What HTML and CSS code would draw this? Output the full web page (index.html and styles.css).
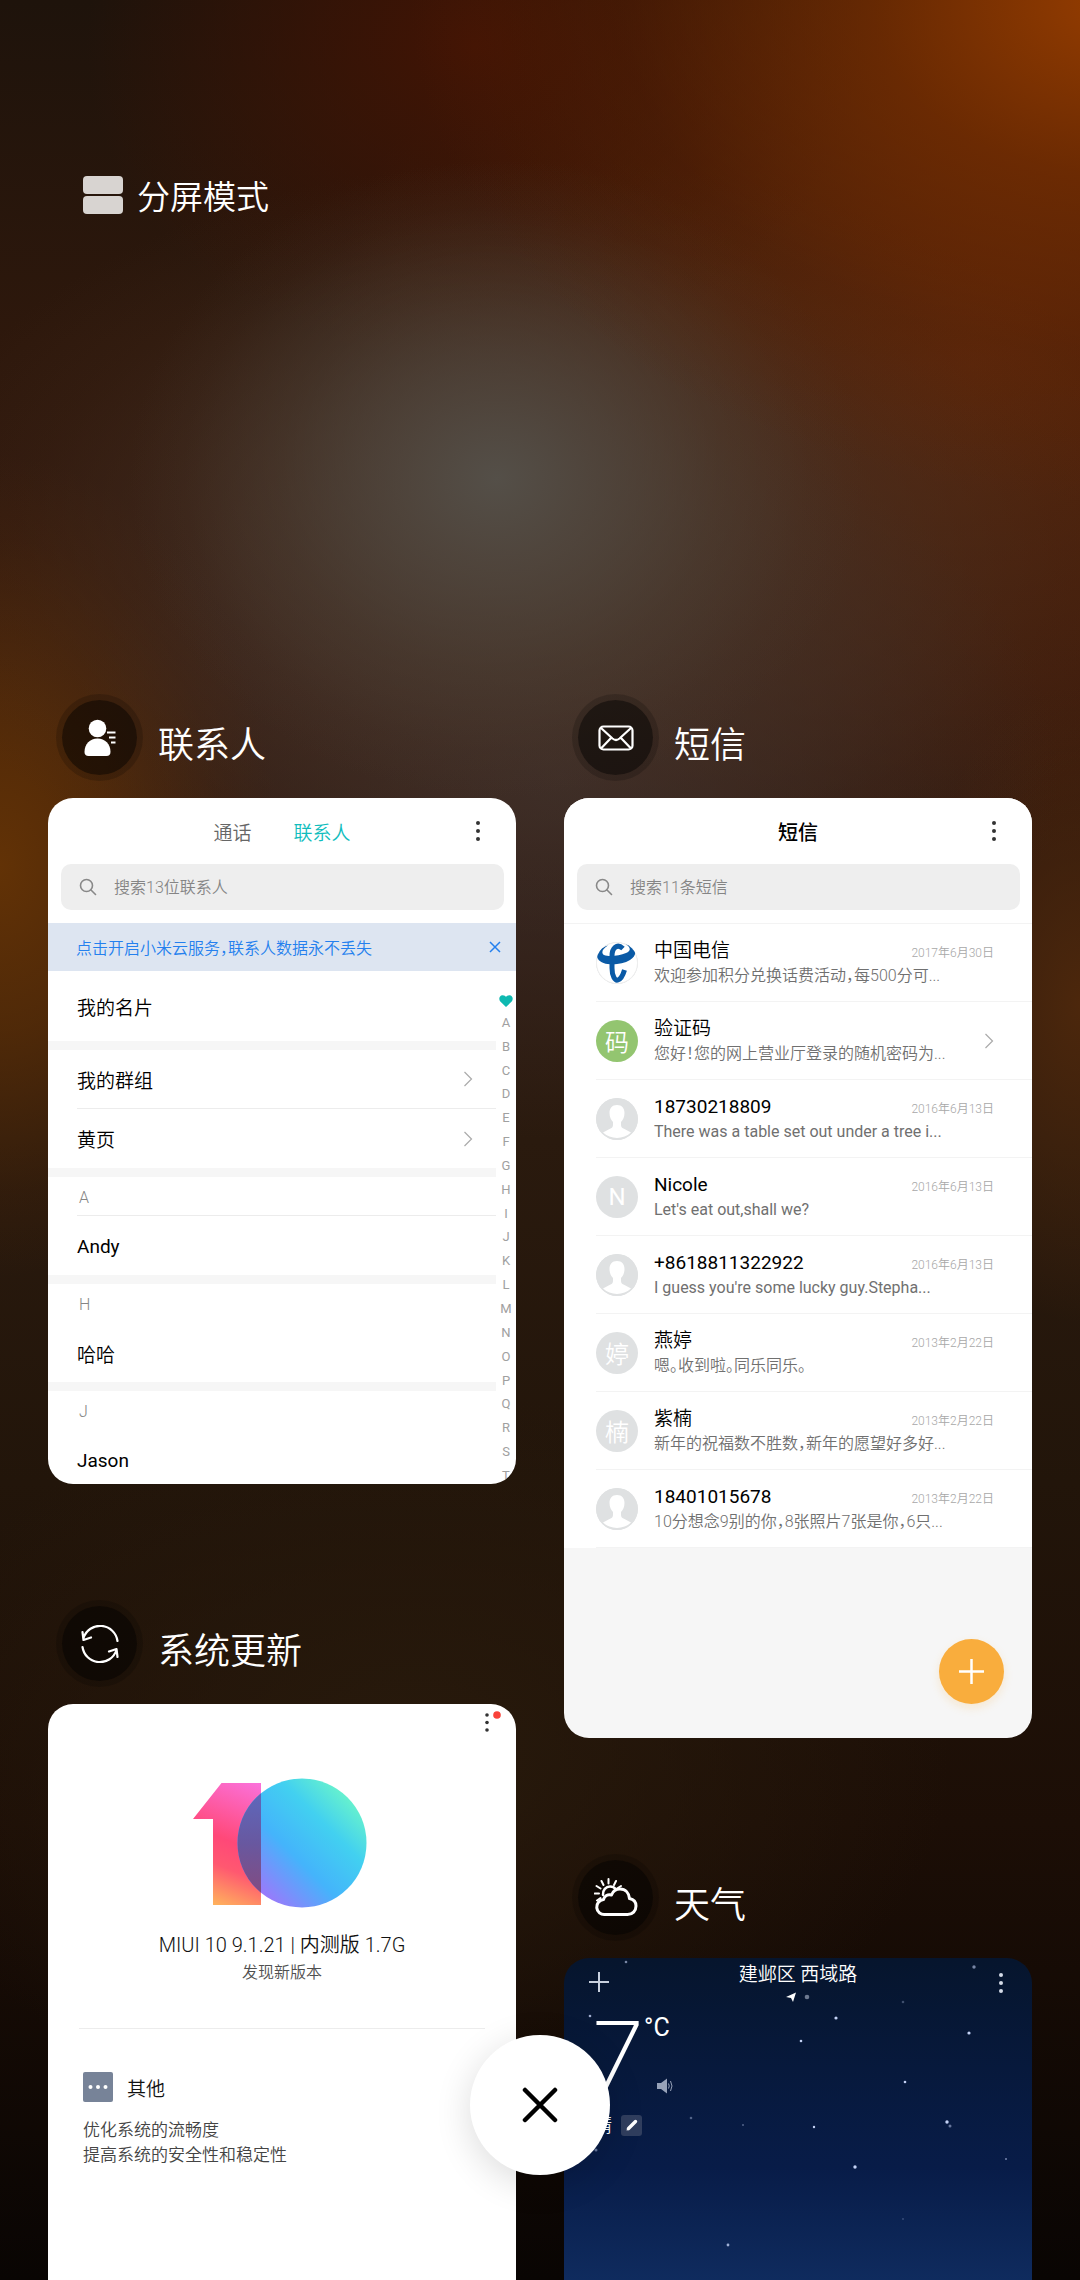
FILE: index.html
```html
<!DOCTYPE html>
<html lang="zh-CN">
<head>
<meta charset="utf-8">
<meta name="viewport" content="width=device-width, initial-scale=1">
<title>最近任务</title>
<link rel="stylesheet" href="styles.css">
</head>
<body>
<svg class="symbols" width="0" height="0" aria-hidden="true">
  <symbol id="more" viewBox="0 0 20 22"><circle cx="10" cy="3" r="2"/><circle cx="10" cy="11" r="2"/><circle cx="10" cy="19" r="2"/></symbol>
  <symbol id="search" viewBox="0 0 18 18"><g fill="none" stroke="currentColor" stroke-width="1.6" stroke-linecap="round"><circle cx="7.5" cy="7.5" r="6"/><path d="M12 12l4.5 4.5"/></g></symbol>
  <symbol id="chevron" viewBox="0 0 10 16"><path d="M1.5 1l7 7-7 7" fill="none" stroke="currentColor" stroke-width="1.2"/></symbol>
  <symbol id="person" viewBox="0 0 42 42"><circle cx="21" cy="21" r="21" fill="#dfe1e2"/><path d="M21 7c-5 0-7.500 3.500-7.500 8 0 4 1.500 7 3.500 9v3c0 2-1 3-3.500 4L7 34.500A20.500 20.500 0 0 0 35 34.500L28.500 31c-2.500-1-3.500-2-3.500-4v-3c2-2 3.500-5 3.500-9 0-4.500-2.500-8-7.500-8z" fill="#fff"/></symbol>
</svg>

<main class="recents">
  <button class="split" type="button">
    <span class="split-icon"><i></i><i></i></span>分屏模式
  </button>

  <div class="columns">
    <div class="column">
      <section class="task">
        <header class="task-head">
          <span class="app-icon">
            <svg width="32" height="38" viewBox="0 0 32 38" fill="#fff"><circle cx="13.500" cy="9.500" r="8.800"/><path d="M13.500 19.500C6 19.500.5 25 .5 33c0 2.500 1.500 4 4 4h18c2.500 0 4-1.500 4-4 0-8-5.500-13.500-13-13.500z"/><path d="M23 13.500h8.500M25 18.500h6.500M27 23.500h4.500" stroke="#fff" stroke-width="2"/></svg>
          </span>
          <h2>联系人</h2>
        </header>
        <article class="card card-contacts">
          <div class="bar">
            <nav class="tabs"><a href="#calls">通话</a><a href="#contacts" class="active">联系人</a></nav>
            <button class="more" type="button" aria-label="更多"><svg width="20" height="22"><use href="#more"/></svg></button>
          </div>
          <label class="search"><svg width="18" height="18"><use href="#search"/></svg><input type="search" placeholder="搜索13位联系人" aria-label="搜索联系人"></label>
          <div class="notice">
            <a href="#cloud">点击开启小米云服务，联系人数据永不丢失</a>
            <button type="button" aria-label="关闭提示"><svg width="12" height="12" viewBox="0 0 12 12"><path d="M1 1l10 10M11 1L1 11" stroke="currentColor" stroke-width="1.5"/></svg></button>
          </div>
          <div class="contacts">
            <div class="contact-list">
              <ul class="group"><li class="mine">我的名片</li></ul>
              <ul class="group"><li class="ruled">我的群组<svg width="10" height="16"><use href="#chevron"/></svg></li><li>黄页<svg width="10" height="16"><use href="#chevron"/></svg></li></ul>
              <h3 class="ruled">A</h3><ul class="group"><li lang="en">Andy</li></ul>
              <h3>H</h3><ul class="group"><li>哈哈</li></ul>
              <h3>J</h3><ul class="group"><li lang="en">Jason</li></ul>
            </div>
            <div class="index" lang="en">
              <svg width="14" height="12" viewBox="0 0 14 12"><path d="M7 12L1.300 6.500C-.6 4.300.2.500 3.500.3 5.200.2 6.400 1.100 7 2c.6-.9 1.800-1.800 3.500-1.700 3.300.2 4.100 4 2.200 6.200z" fill="#0fb9b1"/></svg>
              <span>A</span><span>B</span><span>C</span><span>D</span><span>E</span><span>F</span><span>G</span><span>H</span><span>I</span><span>J</span><span>K</span><span>L</span><span>M</span><span>N</span><span>O</span><span>P</span><span>Q</span><span>R</span><span>S</span><span>T</span>
            </div>
          </div>
        </article>
      </section>

      <section class="task task-open">
        <header class="task-head">
          <span class="app-icon">
            <svg width="38" height="38" viewBox="0 0 38 38" fill="none" stroke="#fff" stroke-width="2.200" stroke-linecap="round" stroke-linejoin="round"><path d="M2.500 13A17.500 17.500 0 0 1 36.500 16M35.500 25A17.500 17.500 0 0 1 1.500 22M1.500 7l1 8 7.500-2.500M36.500 32l-1-8-7.500 2.500"/></svg>
          </span>
          <h2>系统更新</h2>
        </header>
        <article class="card card-update">
          <button class="more" type="button" aria-label="更多"><svg width="24" height="26" viewBox="0 0 24 26"><circle cx="8" cy="5" r="1.800"/><circle cx="8" cy="12.500" r="1.800"/><circle cx="8" cy="20" r="1.800"/><circle cx="18" cy="5" r="3.800" fill="#f9423a"/></svg></button>
          <svg class="logo" width="178" height="132" viewBox="0 0 178 132" role="img" aria-label="MIUI 10">
            <defs>
              <linearGradient id="one" gradientUnits="userSpaceOnUse" x1="68" y1="6" x2="20" y2="128"><stop offset="0" stop-color="#fb72dc"/><stop offset=".5" stop-color="#ff4878"/><stop offset=".7" stop-color="#ff5870"/><stop offset="1" stop-color="#ffb45c"/></linearGradient>
              <linearGradient id="zero" gradientUnits="userSpaceOnUse" x1="160" y1="22" x2="64" y2="118"><stop offset="0" stop-color="#68f3cc"/><stop offset=".28" stop-color="#42d0f0"/><stop offset=".6" stop-color="#44b4fb"/><stop offset="1" stop-color="#a274fb"/></linearGradient>
              <linearGradient id="overlap" x1="0" y1="0" x2="0" y2="1"><stop offset="0" stop-color="#5a6cc4"/><stop offset=".5" stop-color="#6858a0"/><stop offset="1" stop-color="#8a4878"/></linearGradient>
              <clipPath id="stem"><path d="M20 6h48v122H20z"/></clipPath>
            </defs>
            <path d="M0 42L28.500 6H68v122H20V42z" fill="url(#one)"/>
            <circle cx="109" cy="66" r="64.500" fill="url(#zero)"/>
            <circle cx="109" cy="66" r="64.500" fill="url(#overlap)" clip-path="url(#stem)"/>
          </svg>
          <h3>MIUI 10 9.1.21 | 内测版 1.7G</h3>
          <p class="found">发现新版本</p>
          <hr>
          <div class="notes">
            <h4><svg width="30" height="30" viewBox="0 0 30 30"><rect width="30" height="30" rx="2" fill="#778398"/><g fill="#fff"><circle cx="7.500" cy="15" r="2"/><circle cx="15" cy="15" r="2"/><circle cx="22.500" cy="15" r="2"/></g></svg>其他</h4>
            <p>优化系统的流畅度<br>提高系统的安全性和稳定性</p>
          </div>
        </article>
      </section>
    </div>

    <div class="column">
      <section class="task">
        <header class="task-head">
          <span class="app-icon">
            <svg width="36" height="26" viewBox="0 0 36 26" fill="none" stroke="#fff" stroke-width="2.200" stroke-linejoin="round"><rect x="1.500" y="1.500" width="33" height="23" rx="4"/><path d="M3 3l11.500 10.500q3.500 3 7 0L33 3M3 23.500L13 13M33 23.500L23 13"/></svg>
          </span>
          <h2>短信</h2>
        </header>
        <article class="card card-sms">
          <div class="sms-top">
            <div class="bar">
              <h3>短信</h3>
              <button class="more" type="button" aria-label="更多"><svg width="20" height="22"><use href="#more"/></svg></button>
            </div>
            <label class="search"><svg width="18" height="18"><use href="#search"/></svg><input type="search" placeholder="搜索11条短信" aria-label="搜索短信"></label>
          </div>
          <ul class="threads">
            <li>
              <svg class="avatar" viewBox="0 0 42 42"><circle cx="21" cy="21" r="20.500" fill="#fff" stroke="#eee"/><path d="M12 3.500C4 6-1 12 2 17c4 7 22 7 32 1 8-5 7-13-4-16 5 4 5 7 0 9-7 3-17 4-22 2C5 11 6 7 12 3.500z" fill="#0a5aa6"/><path d="M27 6.500C21 1 16 6 16 14v12c0 8 3 13 6 12s5-5 6.500-10" fill="none" stroke="#0a5aa6" stroke-width="5"/></svg>
              <div class="thread"><p class="who"><b>中国电信</b><time>2017年6月30日</time></p><p class="text">欢迎参加积分兑换话费活动，每500分可...</p></div>
            </li>
            <li>
              <span class="avatar green">码</span>
              <div class="thread"><p class="who"><b>验证码</b></p><p class="text">您好！您的网上营业厅登录的随机密码为...</p></div>
              <svg class="go" width="10" height="16"><use href="#chevron"/></svg>
            </li>
            <li>
              <svg class="avatar"><use href="#person"/></svg>
              <div class="thread"><p class="who"><b lang="en">18730218809</b><time>2016年6月13日</time></p><p class="text" lang="en">There was a table set out under a tree i...</p></div>
            </li>
            <li>
              <span class="avatar" lang="en">N</span>
              <div class="thread"><p class="who"><b lang="en">Nicole</b><time>2016年6月13日</time></p><p class="text" lang="en">Let's eat out,shall we?</p></div>
            </li>
            <li>
              <svg class="avatar"><use href="#person"/></svg>
              <div class="thread"><p class="who"><b lang="en">+8618811322922</b><time>2016年6月13日</time></p><p class="text" lang="en">I guess you're some lucky guy.Stepha...</p></div>
            </li>
            <li>
              <span class="avatar">婷</span>
              <div class="thread"><p class="who"><b>燕婷</b><time>2013年2月22日</time></p><p class="text">嗯。收到啦。同乐同乐。</p></div>
            </li>
            <li>
              <span class="avatar">楠</span>
              <div class="thread"><p class="who"><b>紫楠</b><time>2013年2月22日</time></p><p class="text">新年的祝福数不胜数，新年的愿望好多好...</p></div>
            </li>
            <li>
              <svg class="avatar"><use href="#person"/></svg>
              <div class="thread"><p class="who"><b lang="en">18401015678</b><time>2013年2月22日</time></p><p class="text">10分想念9别的你，8张照片7张是你，6只...</p></div>
            </li>
          </ul>
          <div class="compose">
            <button type="button" aria-label="新建短信"><svg width="25" height="25" viewBox="0 0 25 25"><path d="M12.500 0v25M0 12.500h25" stroke="#fff" stroke-width="2.500"/></svg></button>
          </div>
        </article>
      </section>

      <section class="task task-open">
        <header class="task-head">
          <span class="app-icon">
            <svg width="44" height="40" viewBox="0 0 44 40" fill="none" stroke="#fff" stroke-linejoin="round" stroke-linecap="round"><path d="M11 36.500a7.500 7.500 0 0 1-1.500-15c1-3.500 4-5.500 8-4.500 1.500-4 4.500-6 8.500-6 5.500 0 9 4 9.500 9.500 4.500 1 6.500 4 6.500 7.500 0 5-3.500 8.500-8.500 8.500z" stroke-width="3"/><path d="M9 17c-.5-5 3-8.500 7-8.500 2.500 0 4.500 1 5.500 2.500" stroke-width="2.500"/><path d="M14.500 1v4.500M7.500 3l2 4M22 3l-2 4M2.500 8l4 2.500M27 8l-4 2.500M.8 15.500H5M3 22.500L6.500 20" stroke-width="2"/></svg>
          </span>
          <h2>天气</h2>
        </header>
        <article class="card card-weather">
          <svg class="stars" viewBox="0 0 468 322" fill="#c4d2f5" aria-hidden="true"><circle cx="62" cy="4" r="1.300" opacity=".6"/><circle cx="26" cy="58" r="1.300" opacity=".8"/><circle cx="410" cy="9" r="1.700" opacity=".6"/><circle cx="339" cy="44" r="1.300" opacity=".3"/><circle cx="272" cy="60" r="1.600"/><circle cx="237" cy="83" r="1.300"/><circle cx="405" cy="75" r="1.600"/><circle cx="341" cy="124" r="1.300"/><circle cx="127" cy="160" r="1.300" opacity=".4"/><circle cx="179" cy="167" r="1" opacity=".4"/><circle cx="250" cy="169" r="1.200"/><circle cx="383" cy="164" r="1.700"/><circle cx="386" cy="168" r="1.500" opacity=".5"/><circle cx="291" cy="209" r="1.700"/><circle cx="442" cy="201" r=".8"/><circle cx="339" cy="261" r=".8" opacity=".4"/><circle cx="164" cy="287" r="1.400" opacity=".8"/><circle cx="32" cy="192" r="1.500" opacity=".5"/></svg>
          <div class="weather-bar">
            <button type="button" aria-label="添加城市"><svg width="28" height="22" viewBox="0 0 28 22"><path d="M14 0v20M4 10h20" stroke="#c8d0de" stroke-width="2"/></svg></button>
            <h3>建邺区 西域路</h3>
            <button class="weather-more" type="button" aria-label="更多"><svg width="20" height="22"><use href="#more"/></svg></button>
          </div>
          <svg class="pages" width="26" height="16" viewBox="0 0 26 16"><path d="M1 8l10-4.500L8 13 6 9z" fill="#fff"/><circle cx="22" cy="8" r="2.300" fill="#6d7990"/></svg>
          <div class="temperature">
            <span class="degrees">7</span>
            <div class="unit"><span>°C</span><svg width="18" height="16" viewBox="0 0 18 16"><path d="M1 5h4l6-4.500v15L5 11H1z" fill="#97a2b8"/><path d="M12.500 5.500q1.500 2.500 0 5M14.500 3q3 5 0 10" fill="none" stroke="#97a2b8"/></svg></div>
          </div>
          <div class="condition"><span>晴</span><svg width="21" height="21" viewBox="0 0 21 21"><rect width="21" height="21" rx="3" fill="#303e5e"/><path d="M7.500 13.500l7-7" stroke="#fff" stroke-width="3.400" stroke-linecap="round"/><path d="M5.500 15.500l.6-2.500 2 2z" fill="#fff"/></svg></div>
        </article>
      </section>
    </div>
  </div>
</main>

<button class="clear" type="button" aria-label="清除全部"><svg width="36" height="36" viewBox="0 0 36 36"><path d="M3 3l30 30M33 3L3 33" stroke="#000" stroke-width="4.500" stroke-linecap="round"/></svg></button>
</body>
</html>
```

FILE: styles.css
```css
* {
  box-sizing: border-box;
}

body,
h2,
h3,
h4,
p,
ul {
  margin: 0;
  padding: 0;
}

body {
  font-family: Roboto, "Noto Sans CJK SC", sans-serif;
  font-size: 19px;
  font-weight: 350;
  font-feature-settings: "halt";
  color: #111;
  background: #120a05;
}

ul {
  list-style: none;
}

h2,
h3,
h4,
b {
  font-weight: 350;
}

[lang="en"] {
  font-weight: 400;
}

svg {
  display: block;
  flex: none;
}

button {
  padding: 0;
  border: 0;
  background: none;
  font: inherit;
  color: inherit;
}

a {
  color: inherit;
  text-decoration: none;
}

.symbols {
  position: absolute;
}

.recents {
  display: flex;
  flex-direction: column;
  min-height: 100vh;
  padding: 0 48px;
  background:
    radial-gradient(ellipse 66% 22% at 104% 0%, #963d00 0%, rgba(120, 46, 0, 0.75) 35%, rgba(100, 36, 0, 0.3) 70%, transparent 100%),
    radial-gradient(ellipse 34% 14% at 46% 21%, #544f48 0%, rgba(82, 74, 66, 0.8) 25%, rgba(80, 70, 60, 0.38) 60%, rgba(78, 66, 56, 0.1) 85%, transparent 100%),
    radial-gradient(ellipse 60% 17% at 50% 24%, rgba(72, 54, 42, 0.9) 0%, rgba(70, 50, 38, 0.6) 45%, rgba(66, 44, 30, 0.2) 80%, transparent 100%),
    radial-gradient(ellipse 26% 18% at 0% 38%, #623206 0%, rgba(94, 48, 6, 0.7) 40%, rgba(84, 40, 6, 0.2) 80%, transparent 100%),
    radial-gradient(ellipse 46% 16% at 52% 34%, rgba(60, 48, 46, 0.85) 0%, rgba(58, 44, 40, 0.5) 50%, transparent 100%),
    radial-gradient(ellipse 16% 14% at 100% 44%, #4c270c 0%, transparent 100%),
    radial-gradient(ellipse 36% 14% at 44% 2%, #421404 0%, rgba(66, 20, 4, 0.5) 50%, transparent 100%),
    radial-gradient(ellipse 60% 22% at 90% 16%, #5c260a 0%, rgba(86, 36, 10, 0.6) 50%, transparent 100%),
    radial-gradient(ellipse 50% 16% at 38% 77%, #281a0c 0%, transparent 100%),
    linear-gradient(#1e130b 0%, #2e180c 15%, #34190e 30%, #2a1a0e 50%, #22150a 65%, #1c0e06 80%, #090503 100%);
}

.split {
  display: flex;
  align-items: center;
  gap: 14px;
  height: 389px;
  margin-bottom: 311px;
  padding-left: 35px;
  font-size: 33px;
  color: #fff;
}

.split-icon {
  display: grid;
  gap: 2px;
}

.split-icon i {
  width: 40px;
  height: 18px;
  border-radius: 4px;
  background: #d8d4d1;
}

.columns {
  display: grid;
  flex: 1;
  grid-template-columns: 1fr 1fr;
  gap: 48px;
}

.column {
  display: flex;
  flex-direction: column;
  gap: 122px;
  min-width: 0;
}

.task-open,
.task-open .card {
  display: flex;
  flex: 1;
  flex-direction: column;
}

.task-head {
  display: flex;
  gap: 21px;
  height: 98px;
  padding-left: 14px;
}

.app-icon {
  display: grid;
  place-items: center;
  width: 75px;
  height: 75px;
  border-radius: 50%;
  background: rgba(0, 0, 0, 0.54);
  box-shadow: 0 0 0 6px rgba(0, 0, 0, 0.18);
}

.task-head h2 {
  font-size: 36px;
  line-height: 92px;
  color: #fff;
}

.card {
  overflow: hidden;
  border-radius: 25px;
  background: #fff;
}

.task-open .card {
  border-radius: 25px 25px 0 0;
}

.bar {
  display: grid;
  grid-template-columns: 1fr auto 1fr;
  align-items: center;
  height: 66px;
}

.bar > :first-child {
  grid-column: 2;
}

.bar h3 {
  font-size: 20px;
  font-weight: 500;
  color: #000;
}

.bar .more {
  padding-right: 28px;
}

.more {
  justify-self: end;
  fill: #333;
}

.tabs {
  display: flex;
  gap: 42px;
  color: #666;
}

.tabs .active {
  color: #10bdbd;
}

.search {
  display: flex;
  align-items: center;
  gap: 17px;
  height: 46px;
  margin: 0 12px 13px 13px;
  padding-left: 18px;
  border-radius: 10px;
  background: #eee;
  color: #888;
}

.search input {
  flex: 1;
  min-width: 0;
  padding: 0;
  border: 0;
  outline: 0;
  background: none;
  font: inherit;
  font-size: 16px;
}

.search input::placeholder {
  color: #858585;
}

.card-contacts {
  display: flex;
  flex-direction: column;
  height: 686px;
}

.notice {
  display: flex;
  flex: none;
  align-items: center;
  justify-content: space-between;
  height: 48px;
  padding: 0 15px 0 28px;
  background: #dde5f1;
  font-size: 16px;
  color: #2480ee;
}

.contacts {
  display: flex;
  flex: 1;
  min-height: 0;
}

.contact-list {
  flex: 1;
}

.group {
  border-bottom: 9px solid #f6f6f6;
}

.group li {
  display: flex;
  align-items: center;
  justify-content: space-between;
  height: 59px;
  margin-left: 29px;
  padding-right: 23px;
  color: #000;
}

.group li.mine {
  height: 70px;
}

.contact-list h3 + .group li {
  padding-top: 2px;
}

.group svg {
  color: #aaa;
}

.contact-list .ruled {
  border-bottom: 1px solid #ececec;
}

.contact-list h3 {
  height: 39px;
  margin-left: 29px;
  padding-left: 2px;
  font-size: 16px;
  line-height: 42px;
  color: #858585;
}

.index {
  display: flex;
  flex-direction: column;
  align-items: center;
  justify-content: space-between;
  width: 20px;
  padding-top: 24px;
  font-size: 13px;
  line-height: 16px;
  color: #a0a0a0;
}

.card-sms {
  background: #f6f6f6;
}

.sms-top,
.threads {
  overflow: hidden;
  background: #fff;
}

.threads {
  border-top: 1px solid #f3f3f3;
}

.threads li {
  display: flex;
  align-items: center;
  gap: 16px;
  height: 78px;
  margin-left: 32px;
  padding-right: 38px;
  border-bottom: 1px solid #f3f3f3;
}

.avatar {
  display: grid;
  flex: none;
  place-items: center;
  width: 42px;
  height: 42px;
  border-radius: 50%;
  background: #dfe1e2;
  font-size: 24px;
  color: #fff;
}

.avatar.green {
  background: #93c570;
}

.thread {
  flex: 1;
  min-width: 0;
  line-height: 25px;
  white-space: nowrap;
}

.who {
  display: flex;
  align-items: baseline;
  justify-content: space-between;
  height: 25px;
  color: #000;
}

.who time {
  font-size: 12px;
  color: #a8a8a8;
}

.text {
  height: 25px;
  font-size: 16px;
  color: #707070;
}

.go {
  color: #aaa;
}

.compose {
  display: flex;
  justify-content: flex-end;
  padding: 91px 28px 34px;
}

.compose button {
  display: grid;
  place-items: center;
  width: 65px;
  height: 65px;
  border-radius: 50%;
  background: #f9ad3d;
  box-shadow: 0 4px 10px rgba(249, 173, 61, 0.2);
}

.card-update .more {
  align-self: flex-end;
  padding: 6px 13px 0 0;
}

.logo {
  align-self: center;
  margin: 41px 0 22px;
}

.card-update h3,
.found {
  line-height: 28px;
  text-align: center;
  color: #111;
}

.card-update h3 {
  font-size: 20px;
}

.card-update .found {
  font-size: 16px;
  color: #505050;
}

.card-update hr {
  width: calc(100% - 62px);
  margin: 41px 31px 43px;
  border: 0;
  border-top: 1px solid #ececec;
}

.notes {
  padding: 0 36px 0 35px;
}

.notes h4 {
  display: flex;
  align-items: center;
  gap: 14px;
  height: 30px;
  margin-bottom: 16px;
}

.notes p {
  font-size: 17px;
  line-height: 25px;
  color: #444;
}

.card-weather {
  position: relative;
  background: linear-gradient(#06152d 0, #07193c 110px, #081c48 210px, #0f2b5e 322px);
  color: #fff;
}

.stars {
  position: absolute;
  inset: 0 0 auto;
  width: 100%;
}

.weather-bar {
  display: grid;
  grid-template-columns: 1fr auto 1fr;
  height: 31px;
  padding: 3px 21px 0;
}

.weather-bar h3 {
  font-size: 19px;
  line-height: 28px;
}

.weather-bar button {
  align-self: start;
  justify-self: start;
  padding-top: 11px;
}

.weather-bar .weather-more {
  justify-self: end;
  fill: #d5dbe8;
}

.pages {
  align-self: center;
}

.temperature {
  display: flex;
  margin: 3px 0 0 27px;
}

.degrees {
  font-family: Inter, Roboto, sans-serif;
  font-size: 96px;
  font-weight: 200;
  line-height: 96px;
}

.unit {
  padding-top: 5px;
  font-size: 25px;
  font-weight: 400;
  line-height: 30px;
}

.unit svg {
  margin: 35px 0 0 12px;
}

.condition {
  display: flex;
  align-items: center;
  gap: 9px;
  margin: 11px 0 0 29px;
  line-height: 21px;
}

.clear {
  position: fixed;
  bottom: 105px;
  left: calc(50% - 70px);
  display: grid;
  place-items: center;
  width: 140px;
  height: 140px;
  border-radius: 50%;
  background: #fff;
  box-shadow: 0 8px 36px rgba(0, 0, 0, 0.14);
}
```
